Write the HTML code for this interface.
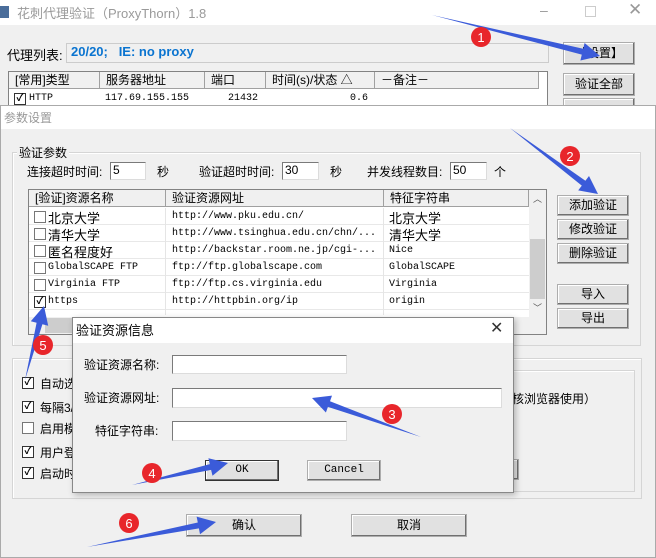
<!DOCTYPE html>
<html><head><meta charset="utf-8"><style>
*{margin:0;padding:0;box-sizing:border-box}
body{width:656px;height:558px;overflow:hidden;background:#f0f0f0;position:relative;font-family:"Liberation Sans","Noto Sans CJK SC",sans-serif;font-size:12px;color:#000}
.a{position:absolute;white-space:nowrap}
.inp{position:absolute;background:#fff;border:1px solid #7a7a7a;border-right-color:#dcdcdc;border-bottom-color:#dcdcdc}
.btn{position:absolute;background:#e1e1e1;border:1px solid #adadad;box-shadow:inset -1px -1px 0 #707070, inset 1px 1px 0 #fff;text-align:center;font-size:12px}
.grp{position:absolute;border:1px solid #d5d5d5;box-shadow:inset 1px 1px 0 #fff}
.cb{position:absolute;width:12px;height:12px;background:#fff;border:1px solid #333;font-size:10px;line-height:10px;text-align:center;font-weight:bold}
.mono{font-family:"Liberation Mono","Noto Sans CJK SC",monospace;font-size:10px}
.hd{position:absolute;top:0;height:17px;background:#f0f0f0;border-right:1px solid #a0a0a0;border-bottom:1px solid #a0a0a0;padding-left:6px;line-height:16px}
</style></head><body>
<div class="a" style="left:0;top:0;width:656px;height:25px;background:#fff"></div>
<div class="a" style="left:0;top:6px;width:9px;height:12px;background:#4a6d9a"></div>
<div class="a" style="left:17px;top:3px;font-size:13px;color:#9a9a9a">花刺代理验证（ProxyThorn）1.8</div>
<div class="a" style="left:540px;top:2px;color:#999;font-size:14px">–</div>
<div class="a" style="left:585px;top:6px;width:11px;height:11px;border:1px solid #ccc"></div>
<div class="a" style="left:628px;top:0px;color:#999;font-size:17px">✕</div>
<div class="a" style="left:7px;top:45px;font-size:13px">代理列表:</div>
<div class="inp" style="left:66px;top:43px;width:483px;height:20px;background:#f0f0f0;border-color:#ccc"></div>
<div class="a" style="left:71px;top:44px;font-size:13px;color:#0a74d0;font-weight:bold">20/20; &nbsp;&nbsp;IE: no proxy</div>
<div class="btn" style="left:563px;top:42px;width:72px;height:23px;line-height:21px">【设置】</div>
<div class="btn" style="left:563px;top:73px;width:72px;height:23px;line-height:21px">验证全部</div>
<div class="a" style="left:8px;top:71px;width:540px;height:36px;background:#fff;border:1px solid #828282"></div>
<div class="a" style="left:9px;top:72px;width:530px;height:17px">
<div class="hd" style="left:0;width:91px">[常用]类型</div><div class="hd" style="left:91px;width:105px">服务器地址</div><div class="hd" style="left:196px;width:61px">端口</div><div class="hd" style="left:257px;width:109px">时间(s)/状态 △</div><div class="hd" style="left:366px;width:164px">－备注－</div></div>
<div class="cb" style="left:14px;top:93px">✓</div>
<div class="a mono" style="left:29px;top:93px">HTTP</div><div class="a mono" style="left:105px;top:93px">117.69.155.155</div><div class="a mono" style="left:228px;top:93px">21432</div><div class="a mono" style="left:350px;top:93px">0.6</div>
<div class="btn" style="left:563px;top:98px;width:72px;height:10px"></div>

<div class="a" style="left:0;top:105px;width:656px;height:453px;background:#f0f0f0;border:1px solid #aaa"></div>
<div class="a" style="left:1px;top:106px;width:654px;height:23px;background:#fff"></div>
<div class="a" style="left:4px;top:109px;color:#999">参数设置</div>
<div class="grp" style="left:12px;top:152px;width:629px;height:194px"></div>
<div class="a" style="left:17px;top:144px;background:#f0f0f0;padding:0 2px">验证参数</div>
<div class="a" style="left:27px;top:163px">连接超时时间:</div><div class="inp" style="left:110px;top:162px;width:36px;height:18px"></div><div class="a" style="left:113px;top:163px">5</div><div class="a" style="left:157px;top:163px">秒</div>
<div class="a" style="left:199px;top:163px">验证超时时间:</div><div class="inp" style="left:282px;top:162px;width:37px;height:18px"></div><div class="a" style="left:285px;top:163px">30</div><div class="a" style="left:330px;top:163px">秒</div>
<div class="a" style="left:367px;top:163px">并发线程数目:</div><div class="inp" style="left:450px;top:162px;width:37px;height:18px"></div><div class="a" style="left:453px;top:163px">50</div><div class="a" style="left:494px;top:163px">个</div>
<div class="a" style="left:28px;top:189px;width:519px;height:146px;background:#fff;border:1px solid #828282"></div>
<div class="a" style="left:29px;top:190px;width:500px;height:17px">
<div class="hd" style="left:0;width:137px">[验证]资源名称</div><div class="hd" style="left:137px;width:218px">验证资源网址</div><div class="hd" style="left:355px;width:145px">特征字符串</div></div>
<div class="a" style="left:529px;top:190px;width:17px;height:144px;background:#f0f0f0"></div>
<div class="a" style="left:530px;top:239px;width:15px;height:60px;background:#cdcdcd"></div>
<div class="a" style="left:533px;top:192px;font-size:9px;color:#555">︿</div><div class="a" style="left:533px;top:301px;font-size:9px;color:#555">﹀</div>
<div class="a" style="left:29px;top:208px;width:500px;height:107px;background:repeating-linear-gradient(#fff 0 16px,#e8e8e8 16px 17px)"></div>
<div class="a" style="left:165px;top:208px;width:1px;height:107px;background:#e5e5e5"></div><div class="a" style="left:383px;top:208px;width:1px;height:107px;background:#e5e5e5"></div>
<div class="cb" style="left:34px;top:211px;border-color:#777"></div><div class="a" style="left:48px;top:208px;font-size:13px">北京大学</div><div class="a mono" style="left:172px;top:211px">http://www.pku.edu.cn/</div><div class="a" style="left:389px;top:208px;font-size:13px">北京大学</div>
<div class="cb" style="left:34px;top:228px;border-color:#777"></div><div class="a" style="left:48px;top:225px;font-size:13px">清华大学</div><div class="a mono" style="left:172px;top:228px">http://www.tsinghua.edu.cn/chn/...</div><div class="a" style="left:389px;top:225px;font-size:13px">清华大学</div>
<div class="cb" style="left:34px;top:245px;border-color:#777"></div><div class="a" style="left:48px;top:242px;font-size:13px">匿名程度好</div><div class="a mono" style="left:172px;top:245px">http://backstar.room.ne.jp/cgi-...</div><div class="a mono" style="left:389px;top:245px">Nice</div>
<div class="cb" style="left:34px;top:262px;border-color:#777"></div><div class="a mono" style="left:48px;top:262px">GlobalSCAPE FTP</div><div class="a mono" style="left:172px;top:262px">ftp://ftp.globalscape.com</div><div class="a mono" style="left:389px;top:262px">GlobalSCAPE</div>
<div class="cb" style="left:34px;top:279px;border-color:#777"></div><div class="a mono" style="left:48px;top:279px">Virginia FTP</div><div class="a mono" style="left:172px;top:279px">ftp://ftp.cs.virginia.edu</div><div class="a mono" style="left:389px;top:279px">Virginia</div>
<div class="cb" style="left:34px;top:296px">✓</div><div class="a mono" style="left:48px;top:296px">https</div><div class="a mono" style="left:172px;top:296px">http://httpbin.org/ip</div><div class="a mono" style="left:389px;top:296px">origin</div>
<div class="a" style="left:29px;top:317px;width:517px;height:17px;background:#f0f0f0"></div>
<div class="a" style="left:45px;top:318px;width:80px;height:15px;background:#cdcdcd"></div>
<div class="btn" style="left:557px;top:195px;width:72px;height:21px;line-height:19px">添加验证</div>
<div class="btn" style="left:557px;top:219px;width:72px;height:21px;line-height:19px">修改验证</div>
<div class="btn" style="left:557px;top:243px;width:72px;height:21px;line-height:19px">删除验证</div>
<div class="btn" style="left:557px;top:284px;width:72px;height:21px;line-height:19px">导入</div>
<div class="btn" style="left:557px;top:308px;width:72px;height:21px;line-height:19px">导出</div>
<div class="grp" style="left:12px;top:358px;width:630px;height:141px"></div>
<div class="grp" style="left:510px;top:370px;width:125px;height:122px"></div>
<div class="a" style="left:512px;top:390px">核浏览器使用）</div>
<div class="btn" style="left:505px;top:459px;width:14px;height:21px"></div>
<div class="cb" style="left:22px;top:377px">✓</div><div class="a" style="left:40px;top:375px">自动选</div>
<div class="cb" style="left:22px;top:401px">✓</div><div class="a" style="left:40px;top:399px">每隔3/</div>
<div class="cb" style="left:22px;top:422px;border-color:#777"></div><div class="a" style="left:40px;top:420px">启用模</div>
<div class="cb" style="left:22px;top:446px">✓</div><div class="a" style="left:40px;top:444px">用户登</div>
<div class="cb" style="left:22px;top:467px">✓</div><div class="a" style="left:40px;top:465px">启动时</div>
<div class="btn" style="left:186px;top:514px;width:116px;height:23px;line-height:21px">确认</div>
<div class="btn" style="left:351px;top:514px;width:116px;height:23px;line-height:21px">取消</div>

<div class="a" style="left:72px;top:317px;width:442px;height:176px;background:#f0f0f0;border:1px solid #888;box-shadow:2px 2px 6px rgba(0,0,0,.25)"></div>
<div class="a" style="left:73px;top:318px;width:440px;height:25px;background:#fff"></div>
<div class="a" style="left:76px;top:320px;font-size:13px">验证资源信息</div>
<div class="a" style="left:490px;top:318px;font-size:16px;color:#333">✕</div>
<div class="a" style="left:84px;top:356px">验证资源名称:</div><div class="inp" style="left:172px;top:355px;width:175px;height:19px"></div>
<div class="a" style="left:84px;top:389px">验证资源网址:</div><div class="inp" style="left:172px;top:388px;width:330px;height:20px"></div>
<div class="a" style="left:95px;top:422px">特征字符串:</div><div class="inp" style="left:172px;top:421px;width:175px;height:20px"></div>
<div class="btn mono" style="left:205px;top:460px;width:74px;height:21px;line-height:19px;font-size:11px;border-color:#333">OK</div>
<div class="btn mono" style="left:307px;top:460px;width:74px;height:21px;line-height:19px;font-size:11px">Cancel</div>

<svg class="a" style="left:0;top:0" width="656" height="558" id="ov"></svg>
<script>
var s='',A=[[432,15,600,56],[510,128,598,194],[421,437,312,398],[132,485,228,463],[25,380,44,306],[87,547,216,522]];
A.forEach(function(a){var dx=a[2]-a[0],dy=a[3]-a[1],L=Math.hypot(dx,dy),ux=dx/L,uy=dy/L,nx=-uy,ny=ux,bx=a[2]-ux*18,by=a[3]-uy*18;
var p=[[a[0],a[1]],[bx+nx*3,by+ny*3],[bx+nx*9,by+ny*9],[a[2],a[3]],[bx-nx*9,by-ny*9],[bx-nx*3,by-ny*3]];
s+='<polygon fill="#3b5bd9" points="'+p.map(function(q){return q[0].toFixed(1)+','+q[1].toFixed(1)}).join(' ')+'"/>';});
var C=[[481,37,1],[570,156,2],[392,414,3],[152,473,4],[43,345,5],[129,523,6]];
C.forEach(function(c){s+='<circle cx="'+c[0]+'" cy="'+c[1]+'" r="10" fill="#e8262b"/><text x="'+c[0]+'" y="'+(c[1]+5)+'" fill="#fff" font-size="13" text-anchor="middle" font-family="Liberation Sans">'+c[2]+'</text>';});
document.getElementById('ov').innerHTML=s;
</script>
</body></html>
